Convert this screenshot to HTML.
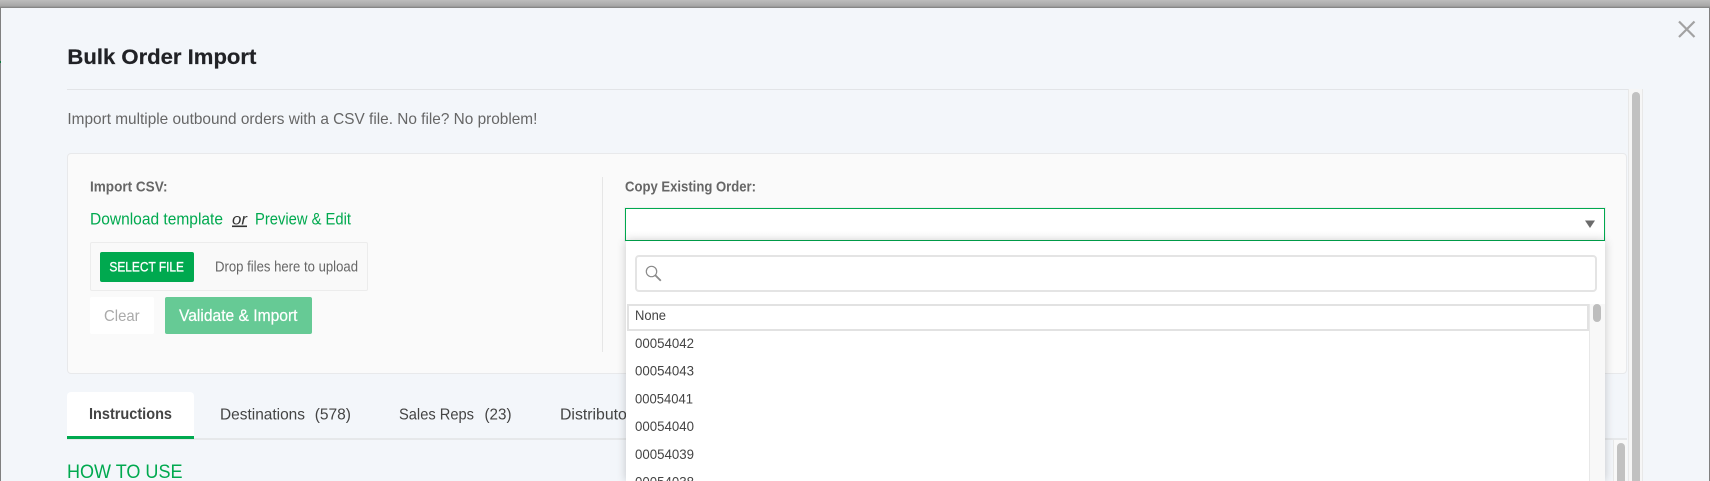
<!DOCTYPE html>
<html lang="en">
<head>
<meta charset="utf-8">
<title>Bulk Order Import</title>
<style>
html,body{margin:0;padding:0;width:1710px;height:481px;overflow:hidden;background:#808080;font-family:"Liberation Sans",sans-serif}
div{position:absolute;box-sizing:border-box}
svg{position:absolute;left:0;top:0}
text{font-family:"Liberation Sans",sans-serif}
</style>
</head>
<body>
<div style="left:0;top:0;width:1710px;height:8px;background:linear-gradient(#bdbdbd,#a6a6a6 75%,#7c7c7c)"></div>
<div style="left:1px;top:8px;width:1708px;height:473px;background:#f3f6fa"></div>
<div style="left:0;top:61px;width:1px;height:2px;background:#0a7a3c"></div>

<!-- header rule -->
<div style="left:67px;top:89px;width:1576px;height:1px;background:#e2e4e7"></div>

<!-- outer scrollbar -->
<div style="left:1628px;top:89px;width:15px;height:392px;background:#f6f6f6;border-left:1px solid #e8e8e8;border-right:1px solid #e8e8e8"></div>
<div style="left:1632px;top:92px;width:8px;height:389px;background:#c1c1c1;border-radius:4px 4px 0 0"></div>

<!-- panel -->
<div style="left:67px;top:153px;width:1560px;height:221px;background:#fafafa;border:1px solid #e8e9eb;border-radius:4px"></div>
<div style="left:602px;top:177px;width:1px;height:175px;background:#e6e6e6"></div>

<!-- dropzone + buttons -->
<div style="left:90px;top:242px;width:278px;height:49px;background:#f9f9f9;border:1px solid #ececec;border-radius:2px"></div>
<div style="left:100px;top:252px;width:94px;height:30px;background:#00a94f;border-radius:2px"></div>
<div style="left:90px;top:297px;width:64px;height:37px;background:#fff;border-radius:2px"></div>
<div style="left:165px;top:297px;width:147px;height:37px;background:#66ca95;border-radius:2px"></div>

<!-- tabs -->
<div style="left:67px;top:438px;width:1560px;height:2px;background:#e6e8ea"></div>
<div style="left:67px;top:392px;width:127px;height:47px;background:#fff;border-radius:4px 4px 0 0;border-bottom:3px solid #00a94f"></div>

<!-- inner scrollbar -->
<div style="left:1613px;top:440px;width:14px;height:41px;background:#f8f8f8;border-left:1px solid #e8e8e8"></div>
<div style="left:1617px;top:443px;width:8px;height:38px;background:#c1c1c1;border-radius:4px 4px 0 0"></div>

<!-- base text -->
<svg width="1710" height="481" viewBox="0 0 1710 481">
<path d="M1679 21.500L1694.500 37M1694.500 21.500L1679 37" stroke="#a2a2a2" stroke-width="2.200" fill="none"/>
<text x="67.400" y="64" font-size="21" font-weight="700" fill="#212226" stroke="#212226" stroke-width=".2" textLength="189" lengthAdjust="spacingAndGlyphs">Bulk Order Import</text>
<text x="67.400" y="124" font-size="16" fill="#666" textLength="470" lengthAdjust="spacingAndGlyphs">Import multiple outbound orders with a CSV file. No file? No problem!</text>
<text x="90" y="191.700" font-size="15" font-weight="700" fill="#666" textLength="77.500" lengthAdjust="spacingAndGlyphs">Import CSV:</text>
<text x="90" y="224.500" font-size="16.500" fill="#00a94f" textLength="133" lengthAdjust="spacingAndGlyphs">Download template</text>
<text x="232" y="224.500" font-size="16" font-style="italic" fill="#333" textLength="15" lengthAdjust="spacingAndGlyphs" text-decoration="underline">or</text>
<text x="255" y="224.500" font-size="16.500" fill="#00a94f" textLength="96" lengthAdjust="spacingAndGlyphs">Preview &amp; Edit</text>
<text x="109.400" y="271.300" font-size="14" fill="#fff" stroke="#fff" stroke-width=".3" textLength="74.600" lengthAdjust="spacingAndGlyphs">SELECT FILE</text>
<text x="215" y="271.300" font-size="14.500" fill="#666" textLength="143" lengthAdjust="spacingAndGlyphs">Drop files here to upload</text>
<text x="104" y="321" font-size="16" fill="#aaa" textLength="35.600" lengthAdjust="spacingAndGlyphs">Clear</text>
<text x="179" y="321" font-size="16.500" fill="#fff" stroke="#fff" stroke-width=".2" textLength="118.500" lengthAdjust="spacingAndGlyphs">Validate &amp; Import</text>
<text x="89" y="419" font-size="15.500" font-weight="700" fill="#444" textLength="83" lengthAdjust="spacingAndGlyphs">Instructions</text>
<text x="220" y="419.500" font-size="16" fill="#444" textLength="85" lengthAdjust="spacingAndGlyphs">Destinations</text>
<text x="314.700" y="419.500" font-size="16" fill="#444" textLength="36.300" lengthAdjust="spacingAndGlyphs">(578)</text>
<text x="399" y="419.500" font-size="16" fill="#444" textLength="75" lengthAdjust="spacingAndGlyphs">Sales Reps</text>
<text x="484.500" y="419.500" font-size="16" fill="#444" textLength="27" lengthAdjust="spacingAndGlyphs">(23)</text>
<text x="560" y="419.500" font-size="16" fill="#444" textLength="80" lengthAdjust="spacingAndGlyphs">Distributors</text>
<text x="67" y="478" font-size="19.500" fill="#00a94f" textLength="115.500" lengthAdjust="spacingAndGlyphs">HOW TO USE</text>
<text x="625" y="191.700" font-size="15" font-weight="700" fill="#666" textLength="131" lengthAdjust="spacingAndGlyphs">Copy Existing Order:</text>
</svg>

<!-- select -->
<div style="left:624px;top:207px;width:982px;height:35px;background:#f0f0f0"></div>
<div style="left:625px;top:208px;width:980px;height:33px;background:linear-gradient(#fff,#fff 70%,#fbfbfb);border:1px solid #00a94f"></div>

<!-- dropdown -->
<div style="left:626px;top:241px;width:979px;height:240px;background:#fff;box-shadow:0 0 9px rgba(0,0,0,.2)"></div>
<div style="left:635px;top:255px;width:962px;height:37px;background:#fff;border:2px solid #e4e4e4;border-radius:4px"></div>
<div style="left:1589px;top:304px;width:16px;height:177px;background:#f8f8f8;border-left:1px solid #e8e8e8"></div>
<div style="left:1593px;top:304px;width:8px;height:18px;background:#bdbdbd;border-radius:4px"></div>
<div style="left:627px;top:304px;width:962px;height:27px;background:#fff;border:2px solid #e2e2e2"></div>

<svg width="1710" height="481" viewBox="0 0 1710 481">
<path d="M1585 220.500H1595L1590 228Z" fill="#6b6b6b"/>
<circle cx="651.500" cy="271.500" r="5.200" stroke="#8a8a8a" stroke-width="1.200" fill="none"/>
<path d="M655.300 275.300L660.800 280.800" stroke="#8a8a8a" stroke-width="1.800" fill="none"/>
<text x="635" y="319.800" font-size="13.800" fill="#444" textLength="31" lengthAdjust="spacingAndGlyphs">None</text>
<text x="635" y="348" font-size="13.800" fill="#444" textLength="59" lengthAdjust="spacingAndGlyphs">00054042</text>
<text x="635" y="375.700" font-size="13.800" fill="#444" textLength="59" lengthAdjust="spacingAndGlyphs">00054043</text>
<text x="635" y="403.400" font-size="13.800" fill="#444" textLength="58" lengthAdjust="spacingAndGlyphs">00054041</text>
<text x="635" y="431.100" font-size="13.800" fill="#444" textLength="59" lengthAdjust="spacingAndGlyphs">00054040</text>
<text x="635" y="458.800" font-size="13.800" fill="#444" textLength="59" lengthAdjust="spacingAndGlyphs">00054039</text>
<text x="635" y="486.500" font-size="13.800" fill="#444" textLength="59" lengthAdjust="spacingAndGlyphs">00054038</text>
</svg>
</body>
</html>
